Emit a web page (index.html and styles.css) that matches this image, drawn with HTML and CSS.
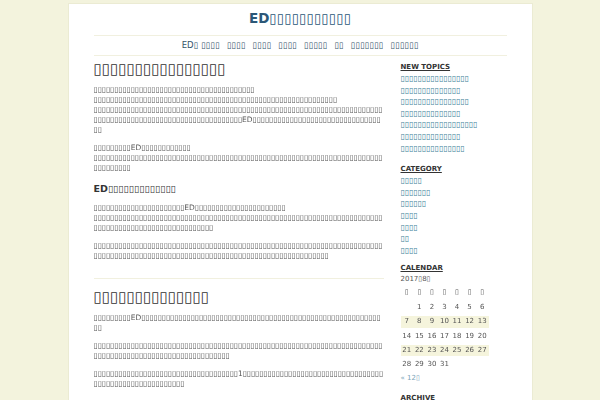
FILE: index.html
```html
<!DOCTYPE html>
<html lang="ja">
<head>
<meta charset="utf-8">
<title>ED</title>
<link rel="stylesheet" href="styles.css">
</head>
<body>
<div class="wrap">
  <header class="site-header">
    <h1 class="site-title">ED▯▯▯▯▯▯▯▯▯▯▯</h1>
    <ul class="nav">
      <li>ED▯ ▯▯▯▯</li>
      <li>▯▯▯▯</li>
      <li>▯▯▯▯</li>
      <li>▯▯▯▯</li>
      <li>▯▯▯▯▯</li>
      <li>▯▯</li>
      <li>▯▯▯▯▯▯▯</li>
      <li>▯▯▯▯▯▯</li>
    </ul>
  </header>
  <div class="layout">
    <main class="main">
      <article class="entry">
        <h2 class="entry-title">▯▯▯▯▯▯▯▯▯▯▯▯▯▯▯▯</h2>
        <p>▯▯▯▯▯▯▯▯▯▯▯▯▯▯▯▯▯▯▯▯▯▯▯▯▯▯▯▯▯▯▯▯▯▯▯▯▯▯▯<br>▯▯▯▯▯▯▯▯▯▯▯▯▯▯▯▯▯▯▯▯▯▯▯▯▯▯▯▯▯▯▯▯▯▯▯▯▯▯▯▯▯▯▯▯▯▯▯▯▯▯▯▯▯▯▯▯▯▯▯<br>▯▯▯▯▯▯▯▯▯▯▯▯▯▯▯▯▯▯▯▯▯▯▯▯▯▯▯▯▯▯▯▯▯▯▯▯▯▯▯▯▯▯▯▯▯▯▯▯▯▯▯▯▯▯▯▯▯▯▯▯▯▯▯▯▯▯▯▯▯▯▯▯▯▯▯▯▯▯▯▯▯▯▯▯▯▯▯▯▯▯▯▯▯▯▯▯▯▯▯▯▯▯▯▯▯▯ED▯▯▯▯▯▯▯▯▯▯▯▯▯▯▯▯▯▯▯▯▯▯▯▯▯▯▯▯▯▯▯▯▯</p>
        <p>▯▯▯▯▯▯▯▯▯ED▯▯▯▯▯▯▯▯▯▯▯▯<br>▯▯▯▯▯▯▯▯▯▯▯▯▯▯▯▯▯▯▯▯▯▯▯▯▯▯▯▯▯▯▯▯▯▯▯▯▯▯▯▯▯▯▯▯▯▯▯▯▯▯▯▯▯▯▯▯▯▯▯▯▯▯▯▯▯▯▯▯▯▯▯▯▯▯▯▯▯▯▯</p>
        <h3>ED▯▯▯▯▯▯▯▯▯▯▯▯▯</h3>
        <p>▯▯▯▯▯▯▯▯▯▯▯▯▯▯▯▯▯▯▯▯▯▯ED▯▯▯▯▯▯▯▯▯▯▯▯▯▯▯▯▯▯▯▯▯▯<br>▯▯▯▯▯▯▯▯▯▯▯▯▯▯▯▯▯▯▯▯▯▯▯▯▯▯▯▯▯▯▯▯▯▯▯▯▯▯▯▯▯▯▯▯▯▯▯▯▯▯▯▯▯▯▯▯▯▯▯▯▯▯▯▯▯▯▯▯▯▯▯▯▯▯▯▯▯▯▯▯▯▯▯▯▯▯▯▯▯▯▯▯▯▯▯▯▯▯▯</p>
        <p>▯▯▯▯▯▯▯▯▯▯▯▯▯▯▯▯▯▯▯▯▯▯▯▯▯▯▯▯▯▯▯▯▯▯▯▯▯▯▯▯▯▯▯▯▯▯▯▯▯▯▯▯▯▯▯▯▯▯▯▯▯▯▯▯▯▯▯▯▯▯▯▯▯▯▯▯▯▯▯▯▯▯▯▯▯▯▯▯▯▯▯▯▯▯▯▯▯▯▯▯▯▯▯▯▯▯▯▯▯▯▯▯▯▯▯▯▯▯▯▯▯▯▯▯▯▯▯</p>
      </article>
      <article class="entry">
        <h2 class="entry-title">▯▯▯▯▯▯▯▯▯▯▯▯▯▯</h2>
        <p>▯▯▯▯▯▯▯▯▯ED▯▯▯▯▯▯▯▯▯▯▯▯▯▯▯▯▯▯▯▯▯▯▯▯▯▯▯▯▯▯▯▯▯▯▯▯▯▯▯▯▯▯▯▯▯▯▯▯▯▯▯▯▯▯▯▯▯▯▯▯</p>
        <p>▯▯▯▯▯▯▯▯▯▯▯▯▯▯▯▯▯▯▯▯▯▯▯▯▯▯▯▯▯▯▯▯▯▯▯▯▯▯▯▯▯▯▯▯▯▯▯▯▯▯▯▯▯▯▯▯▯▯▯▯▯▯▯▯▯▯▯▯▯▯▯▯▯▯▯▯▯▯▯▯▯▯▯▯▯▯▯▯▯▯▯▯▯▯▯▯▯▯▯▯▯▯▯</p>
        <p>▯▯▯▯▯▯▯▯▯▯▯▯▯▯▯▯▯▯▯▯▯▯▯▯▯▯▯▯▯▯▯▯▯▯▯1▯▯▯▯▯▯▯▯▯▯▯▯▯▯▯▯▯▯▯▯▯▯▯▯▯▯▯▯▯▯▯▯▯▯▯▯▯▯▯▯▯▯▯▯▯▯▯▯▯▯▯▯▯▯▯▯</p>
      </article>
    </main>
    <aside class="sidebar">
      <section class="widget widget-new">
        <h3>NEW TOPICS</h3>
        <ul>
          <li><a href="#">▯▯▯▯▯▯▯▯▯▯▯▯▯▯▯▯</a></li>
          <li><a href="#">▯▯▯▯▯▯▯▯▯▯▯▯▯▯</a></li>
          <li><a href="#">▯▯▯▯▯▯▯▯▯▯▯▯▯▯▯▯</a></li>
          <li><a href="#">▯▯▯▯▯▯▯▯▯▯▯▯▯▯</a></li>
          <li><a href="#">▯▯▯▯▯▯▯▯▯▯▯▯▯▯▯▯▯▯</a></li>
          <li><a href="#">▯▯▯▯▯▯▯▯▯▯▯▯▯▯</a></li>
          <li><a href="#">▯▯▯▯▯▯▯▯▯▯▯▯▯▯▯</a></li>
        </ul>
      </section>
      <section class="widget widget-cat">
        <h3>CATEGORY</h3>
        <ul>
          <li><a href="#">▯▯▯▯▯</a></li>
          <li><a href="#">▯▯▯▯▯▯▯</a></li>
          <li><a href="#">▯▯▯▯▯▯</a></li>
          <li><a href="#">▯▯▯▯</a></li>
          <li><a href="#">▯▯▯▯</a></li>
          <li><a href="#">▯▯</a></li>
          <li><a href="#">▯▯▯▯</a></li>
        </ul>
      </section>
      <section class="widget widget-cal">
        <h3>CALENDAR</h3>
        <div class="cal-caption">2017▯8▯</div>
        <table class="cal">
          <tr><th>▯</th><th>▯</th><th>▯</th><th>▯</th><th>▯</th><th>▯</th><th>▯</th></tr>
          <tr><td></td><td>1</td><td>2</td><td>3</td><td>4</td><td>5</td><td>6</td></tr>
          <tr class="alt"><td>7</td><td>8</td><td>9</td><td>10</td><td>11</td><td>12</td><td>13</td></tr>
          <tr><td>14</td><td>15</td><td>16</td><td>17</td><td>18</td><td>19</td><td>20</td></tr>
          <tr class="alt"><td>21</td><td>22</td><td>23</td><td>24</td><td>25</td><td>26</td><td>27</td></tr>
          <tr><td>28</td><td>29</td><td>30</td><td>31</td><td></td><td></td><td></td></tr>
        </table>
        <div class="cal-nav"><a href="#">« 12▯</a></div>
      </section>
      <section class="widget">
        <h3>ARCHIVE</h3>
        <ul>
          <li><a href="#">2017▯8▯</a></li>
          <li><a href="#">2016▯12▯</a></li>
        </ul>
      </section>
    </aside>
  </div>
</div>
</body>
</html>
```
FILE: styles.css
```css
* { box-sizing: border-box; }
html, body { margin: 0; padding: 0; }
body {
  background: #f3f3dd;
  font-family: "DejaVu Sans", sans-serif;
  color: #555;
}
.wrap {
  width: 465px;
  margin: 3px auto 0;
  background: #fff;
  border: 1px solid #ebebd3;
  border-bottom: 0;
  padding: 0 25px;
  min-height: 420px;
}
.site-title {
  margin: 0;
  padding: 6px 0 9px;
  text-align: center;
  font-size: 13.5px;
  line-height: 16px;
  font-weight: bold;
  color: #2b5777;
}
.nav {
  display: flex;
  justify-content: center;
  gap: 7px;
  margin: 0;
  padding: 0;
  list-style: none;
  height: 21px;
  line-height: 19px;
  border-top: 1px solid #f1f0df;
  border-bottom: 1px solid #f1f0df;
  font-size: 8.5px;
  color: #34546a;
}
.layout {
  display: flex;
  gap: 17px;
}
.main {
  width: 290px;
  flex: none;
  padding-top: 4px;
}
.sidebar {
  width: 107px;
  flex: none;
  padding-top: 5px;
}
.entry {
  padding-bottom: 9px;
  border-bottom: 1px solid #f1f0df;
}
.entry + .entry {
  padding-top: 9px;
  border-bottom: 0;
}
.entry-title {
  margin: 0 0 7px;
  font-size: 15px;
  line-height: 18px;
  font-weight: normal;
  color: #333;
}
.entry p {
  margin: 0 0 8px;
  font-size: 7.5px;
  line-height: 10px;
  word-break: break-all;
  color: #555;
  filter: grayscale(1);
}
.entry h3 {
  margin: 10px 0 8px;
  font-size: 9.5px;
  line-height: 12px;
  font-weight: bold;
  color: #333;
}
.widget { margin-bottom: 9px; }
.widget-cat { margin-bottom: 6px; }
.widget h3 {
  margin: 0;
  font-size: 7px;
  line-height: 12px;
  font-weight: bold;
  color: #333;
  text-decoration: underline;
}
.widget ul {
  list-style: none;
  margin: 0;
  padding: 0;
  font-size: 7.75px;
  line-height: 11.6px;
}
.widget a {
  color: #3e7f99;
  text-decoration: none;
}
.cal-caption {
  font-size: 7px;
  line-height: 10px;
  color: #555;
}
.cal {
  width: 88px;
  table-layout: fixed;
  border-collapse: separate;
  border-spacing: 0 3px;
  font-size: 7px;
  color: #555;
}
.cal th, .cal td {
  padding: 0;
  height: 11.4px;
  line-height: 11.4px;
  text-align: center;
  font-weight: normal;
  filter: grayscale(1);
}
.cal tr.alt { background: #f5f4dc; }
.cal-nav {
  font-size: 7px;
  line-height: 9px;
}
.cal-nav a { color: #7aa4b8; }
```
